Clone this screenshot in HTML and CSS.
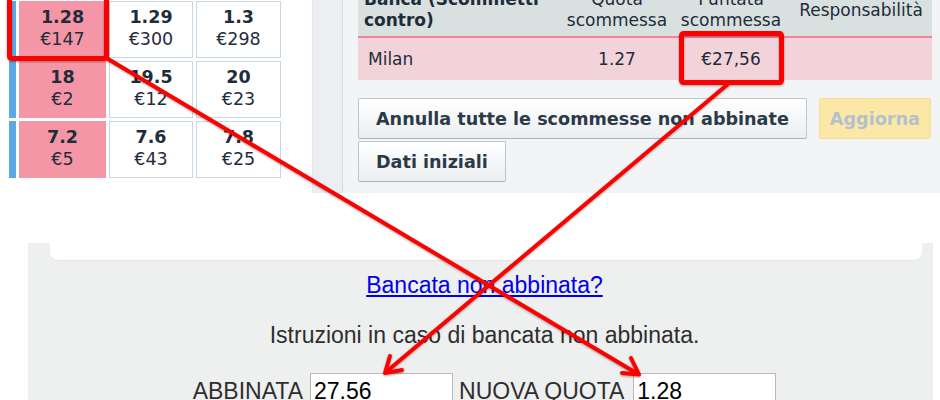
FILE: index.html
```html
<!DOCTYPE html>
<html lang="it">
<head>
    <meta charset="UTF-8">
    <title>Bancata non abbinata</title>
<link rel="stylesheet" href="styles.css">
</head>
<body>
<div class="page">
    <div class="top">
        <div class="ladder">
            <span class="bar"></span>
            <div class="cell lay"><b>1.28</b><span>€147</span></div>
            <div class="cell"><b>1.29</b><span>€300</span></div>
            <div class="cell"><b>1.3</b><span>€298</span></div>

            <span class="bar"></span>
            <div class="cell lay"><b>18</b><span>€2</span></div>
            <div class="cell"><b>19.5</b><span>€12</span></div>
            <div class="cell"><b>20</b><span>€23</span></div>

            <span class="bar"></span>
            <div class="cell lay"><b>7.2</b><span>€5</span></div>
            <div class="cell"><b>7.6</b><span>€43</span></div>
            <div class="cell"><b>7.8</b><span>€25</span></div>
        </div>

        <div class="panel">
            <div class="panel-inner">
                <table class="bets">
                    <colgroup>
                        <col class="c-sel">
                        <col class="c-odds">
                        <col class="c-stake">
                        <col>
                    </colgroup>
                    <thead>
                        <tr>
                            <th class="sel">Banca (Scommetti contro)</th>
                            <th>Quota scommessa</th>
                            <th>Puntata scommessa</th>
                            <th>Responsabilità</th>
                        </tr>
                    </thead>
                    <tbody>
                        <tr>
                            <td class="sel">Milan</td>
                            <td>1.27</td>
                            <td>€27,56</td>
                            <td></td>
                        </tr>
                    </tbody>
                </table>
                <div class="actions">
                    <button class="btn">Annulla tutte le scommesse non abbinate</button>
                    <button class="btn btn-update" disabled>Aggiorna</button>
                    <button class="btn">Dati iniziali</button>
                </div>
            </div>
        </div>
    </div>

    <div class="lower">
        <div class="card-end"></div>
        <p class="help"><a href="#">Bancata non abbinata?</a></p>
        <p class="note">Istruzioni in caso di bancata non abbinata.</p>
        <div class="fields">
            <label for="matched">ABBINATA</label>
            <input type="text" id="matched" value="27.56">
            <label for="newOdds">NUOVA QUOTA</label>
            <input type="text" id="newOdds" value="1.28">
        </div>
    </div>

    <!-- annotations drawn over the screenshot -->
    <svg class="marks" width="940" height="400" viewBox="0 0 940 400">
        <rect x="9.5" y="-10" width="97" height="68.5" rx="2"/>
        <rect x="681.5" y="33.5" width="100" height="49" rx="2"/>
        <path class="line" d="M108 59 L638 374"/>
        <path class="line" d="M622 373 L639 374.5 L631 358"/>
        <path class="line" d="M728 84 L386 372"/>
        <path class="line" d="M390 356 L385 373 L402 370"/>
    </svg>
</div>
</body>
</html>
```

FILE: styles.css
```css
body {
    margin: 0;
    background-color: #fff;
}
.page {
    position: relative;
    width: 940px;
    height: 400px;
    overflow: hidden;
}

/* top: cropped exchange screenshot */
.top {
    display: flex;
    height: 193px;
    font-family: "DejaVu Sans", Verdana, sans-serif;
    color: #1f2d3b;
}
.ladder {
    display: grid;
    grid-template-columns: 7px 87px 84px 85px;
    grid-auto-rows: 57px;
    gap: 3px;
    margin: 1px 0 0 9px;
    align-self: flex-start;
}
.bar {
    background-color: #5ca8e6;
}
.cell {
    box-sizing: border-box;
    border: 1px solid #c9d6e3;
    background-color: #fff;
    text-align: center;
    padding-top: 4px;
    font-size: 17.5px;
    line-height: 22px;
}
.cell b,
.cell span {
    display: block;
}
.cell.lay {
    background-color: #f596a7;
    border-color: #f596a7;
}
.panel {
    flex: 1;
    display: flex;
    margin-left: 31px;
    padding-left: 29px;
    background-color: #eceef1;
    border-left: 1px solid #e2e6ea;
}
.panel-inner {
    flex: 1;
    padding: 0 8px 10px 15px;
    background-color: #f3f4f6;
    border-left: 1px solid #d3dae2;
}
.bets {
    width: 574px;
    margin-top: -15px;
    table-layout: fixed;
    border-collapse: collapse;
    font-size: 17px;
}
.c-sel {
    width: 204px;
}
.c-odds {
    width: 110px;
}
.c-stake {
    width: 118px;
}
.bets th {
    padding: 4px 0 5px;
    line-height: 21px;
    font-weight: normal;
    text-align: center;
    vertical-align: middle;
    background-color: #d9e0e0;
    border-bottom: 2px solid #f3839b;
}
.bets th.sel {
    font-weight: bold;
}
.bets .sel {
    text-align: left;
    padding-left: 6px;
}
.bets td {
    height: 42px;
    padding: 0;
    text-align: center;
    background-color: #f3d3da;
}
.bets td.sel {
    padding-left: 10px;
}
.actions {
    display: flex;
    flex-wrap: wrap;
    column-gap: 12px;
    row-gap: 2px;
    margin-top: 18px;
}
.btn {
    height: 41px;
    padding: 0 17px;
    font-family: "DejaVu Sans", Verdana, sans-serif;
    font-size: 17.6px;
    font-weight: bold;
    color: #2b3a48;
    background: linear-gradient(#fff, #eceef0);
    border: 1px solid #bac6d1;
    border-bottom-color: #a3b3c2;
    border-radius: 2px;
}
.btn-update {
    padding: 0 10px;
    color: #b4c0cb;
    background: #fbe8a6;
    border-color: #f5df98;
}

/* bottom: help box */
.lower {
    margin: 50px 7px 0 28px;
    padding: 0 0 40px 8px;
    background-color: #eef0ef;
    font-family: "Liberation Sans", Arial, sans-serif;
    font-size: 23px;
    color: #2e2e2e;
    text-align: center;
}
.card-end {
    height: 17px;
    margin: 0 11px 0 14px;
    background-color: #fff;
    border-radius: 0 0 8px 8px;
    box-shadow: 0 1px 1px rgba(0, 0, 0, 0.04);
}
.help {
    margin: 12px 0 0;
    line-height: 26px;
}
.help a {
    color: #0000ee;
}
.note {
    margin: 24px 0 0;
    line-height: 26px;
}
.fields {
    display: flex;
    justify-content: center;
    align-items: baseline;
    gap: 7px;
    margin-top: 25px;
}
.fields input {
    box-sizing: border-box;
    width: 143px;
    height: 36px;
    padding: 4px 3px;
    font-family: "Liberation Sans", Arial, sans-serif;
    font-size: 23px;
    color: #000;
    background-color: #fff;
    border: 1px solid #b9b9b9;
}
.fields label + input + label {
    margin-left: -1px;
}
.fields input:last-child {
    margin-left: 2px;
}

.marks {
    position: absolute;
    top: 0;
    left: 0;
    pointer-events: none;
    fill: none;
    stroke: #f00;
    stroke-width: 5;
    stroke-linejoin: round;
    filter: drop-shadow(0 1px 1px rgba(0, 0, 0, 0.35));
}
.marks .line {
    stroke-width: 4;
    stroke-linecap: round;
}
```
